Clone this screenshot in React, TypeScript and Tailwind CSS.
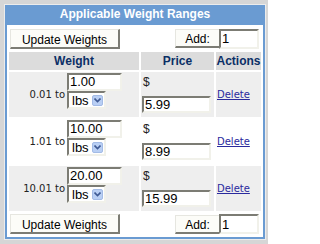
import React from 'react';

const ui = { fontFamily: '"Liberation Sans", Arial, sans-serif' };
const small = { fontFamily: '"DejaVu Sans", Verdana, sans-serif' };

function TextBox({ value, w, h }: { value: string; w: string; h: string }) {
  return (
    <input
      readOnly
      value={value}
      style={ui}
      className={`${w} ${h} box-border bg-white border-2 border-t-[#7c7c74] border-l-[#7c7c74] border-b-[#f1f1ea] border-r-[#f1f1ea] pl-[1px] text-[13px] text-black outline-none`}
    />
  );
}

function UnitSelect() {
  return (
    <div
      style={ui}
      className="w-[39px] h-[18px] box-border flex items-center bg-white border-2 border-t-[#7c7c74] border-l-[#7c7c74] border-b-[#f1f1ea] border-r-[#f1f1ea] pl-[3px] pr-[1px] text-[13px] text-black"
    >
      <span className="flex-1 leading-none">lbs</span>
      <span className="w-[11px] h-[11px] flex items-center justify-center rounded-[2px] bg-[#b9cff4] border border-[#a3bbe6]">
        <svg width="7" height="5" viewBox="0 0 7 5">
          <path d="M0.5 0.5 L3.5 3.5 L6.5 0.5" fill="none" stroke="#3f5a94" strokeWidth="1.6" />
        </svg>
      </span>
    </div>
  );
}

function Toolbar({ h }: { h: string }) {
  return (
    <div className={`${h} flex items-center justify-between pl-[1px] pr-[2px]`}>
      <button
        style={ui}
        className="w-[110px] h-[20px] box-border bg-[#fcfcf8] border-t border-l border-t-[#e6e6e0] border-l-[#e6e6e0] border-b-2 border-r-2 border-b-[#7c7c74] border-r-[#7c7c74] text-[12px] leading-[14px] pt-[3px] text-black"
      >
        Update Weights
      </button>
      <div className="flex items-center">
        <div
          style={ui}
          className="w-[44px] h-[19px] box-border flex items-center justify-center bg-[#fcfcf8] border-t border-l border-[#e6e6e0] border-b-2 border-b-[#7c7c74] text-[12px] pt-[2px] text-black"
        >
          Add:
        </div>
        <TextBox value="1" w="w-[40px]" h="h-[20px]" />
      </div>
    </div>
  );
}

export default function App() {
  const rows = [
    { from: '0.01', to: '1.00', price: '5.99', bg: 'bg-[#eeeeee]' },
    { from: '1.01', to: '10.00', price: '8.99', bg: 'bg-white' },
    { from: '10.01', to: '20.00', price: '15.99', bg: 'bg-[#eeeeee]' },
  ];

  return (
    <div className="w-[268px] h-[244px] bg-[#d6d6d6] pt-[4px] pl-[4px]">
      <div className="w-[262px] h-[236px] box-border border border-[#ececec]">
        <div className="h-full box-border border-2 border-[#6a9bd2] bg-white flex flex-col">
          {/* title bar */}
          <div
            style={ui}
            className="h-[18px] bg-[#6a9bd2] text-white text-[12px] font-bold leading-[14px] text-center"
          >
            Applicable Weight Ranges
          </div>

          <div className="flex flex-col gap-[2px] p-[2px]">
            <Toolbar h="h-[23px]" />

            <div className="grid grid-cols-[130px_73px_45px] gap-[2px]">
              {['Weight', 'Price', 'Actions'].map((t) => (
                <div
                  key={t}
                  style={ui}
                  className="h-[18px] bg-[#dcdcdc] flex items-center justify-center text-[12px] font-bold text-[#0b2f66]"
                >
                  {t}
                </div>
              ))}

              {rows.map((r) => (
                <React.Fragment key={r.from}>
                  <div className={`${r.bg} h-[45px] flex`}>
                    <div
                      style={small}
                      className="w-[58px] flex items-center justify-end pr-[2px] text-[10px] text-[#222222]"
                    >
                      {r.from} to
                    </div>
                    <div className="flex flex-col pt-[1px]">
                      <TextBox value={r.to} w="w-[55px]" h="h-[18px]" />
                      <UnitSelect />
                    </div>
                  </div>
                  <div className={`${r.bg} h-[45px] flex flex-col pl-[1px] pt-[4px]`}>
                    <span style={ui} className="h-[12px] leading-[12px] text-[12px] text-[#222222] pl-[1px]">
                      $
                    </span>
                    <div className="mt-[3px]">
                      <TextBox value={r.price} w="w-[69px]" h="h-[17px]" />
                    </div>
                  </div>
                  <div className={`${r.bg} h-[45px] flex items-center pl-[1px]`}>
                    <a style={small} className="text-[10px] text-[#2a2a9e] underline cursor-pointer">
                      Delete
                    </a>
                  </div>
                </React.Fragment>
              ))}
            </div>

            <Toolbar h="h-[22px]" />
          </div>
        </div>
      </div>
    </div>
  );
}
